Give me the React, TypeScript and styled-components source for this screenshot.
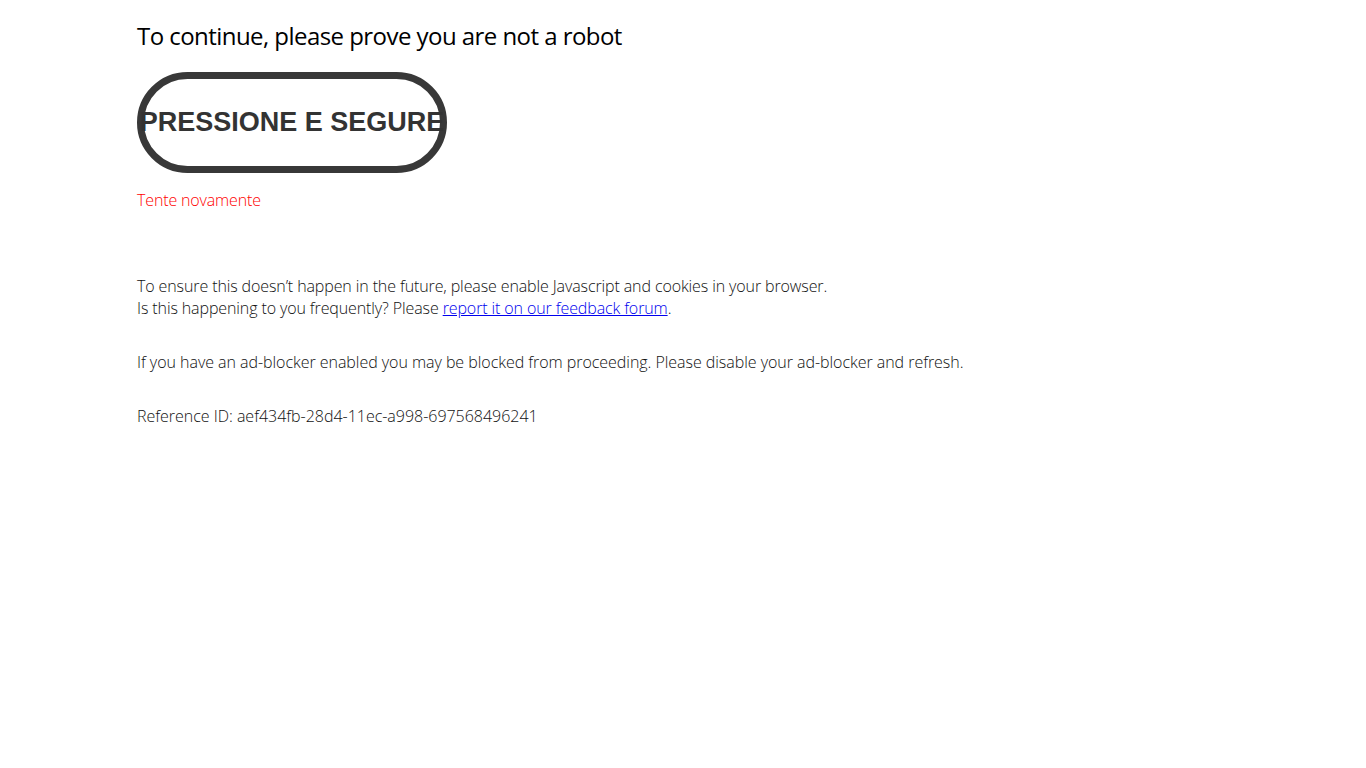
import React, {FC} from "react";
import styled, {createGlobalStyle} from "styled-components";

const GlobalStyle = createGlobalStyle`
  html, body {
    margin: 0;
    padding: 0;
    background: #fff;
  }
  body {
    font-family: "Open Sans", "Liberation Sans", sans-serif;
    color: #111;
  }
`;

const Page = styled.div`
  display: flex;
  flex-direction: column;
  align-items: flex-start;
  padding: 18px 0 0 137px;
`;

const Title = styled.h1`
  margin: 0;
  font-size: 24px;
  font-weight: 400;
  line-height: 36px;
  color: #000;
  letter-spacing: -0.55px;
`;

const HoldButton = styled.button`
  margin-top: 18px;
  width: 310px;
  height: 101px;
  box-sizing: border-box;
  border: 7px solid #383838;
  border-radius: 51px;
  background: #fff;
  padding: 0;
  display: flex;
  align-items: center;
  justify-content: center;
  font-family: "Liberation Sans", Arial, sans-serif;
  font-weight: 700;
  font-size: 27px;
  color: #333;
  white-space: nowrap;
  overflow: visible;
  cursor: pointer;
`;

const ErrorText = styled.p`
  margin: 16px 0 0;
  font-size: 16px;
  font-weight: 300;
  line-height: 22px;
  color: #ff0000;
  letter-spacing: -0.15px;
`;

const InfoBlock = styled.div`
  margin-top: 64px;
  display: flex;
  flex-direction: column;
  gap: 32px;
`;

const Paragraph = styled.p<{ $tracking?: number }>`
  margin: 0;
  font-size: 16px;
  font-weight: 300;
  line-height: 22px;
  color: #111;
  letter-spacing: ${({ $tracking = 0 }) => `${$tracking}px`};

  a {
    color: #0000ee;
    text-decoration: underline;
  }
`;

const App: FC = () => {
  return (
    <>
      <GlobalStyle />
      <Page>
        <Title>To continue, please prove you are not a robot</Title>
        <HoldButton>PRESSIONE E SEGURE</HoldButton>
        <ErrorText>Tente novamente</ErrorText>
        <InfoBlock>
          <Paragraph $tracking={-0.11}>
            To ensure this doesn’t happen in the future, please enable Javascript and cookies in your browser.
            <br />
            Is this happening to you frequently? Please <a href="#">report it on our feedback forum</a>.
          </Paragraph>
          <Paragraph $tracking={-0.04}>
            If you have an ad-blocker enabled you may be blocked from proceeding. Please disable your ad-blocker and refresh.
          </Paragraph>
          <Paragraph $tracking={-0.02}>Reference ID: aef434fb-28d4-11ec-a998-697568496241</Paragraph>
        </InfoBlock>
      </Page>
    </>
  );
};

export default App;
